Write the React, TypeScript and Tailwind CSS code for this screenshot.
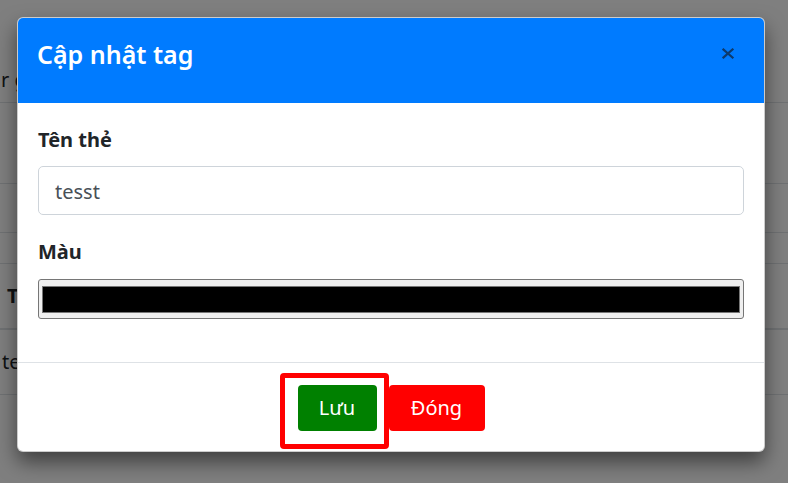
import React from "react";

export default function App() {
  return (
    <div
      className="relative w-[788px] h-[483px] overflow-hidden bg-white text-[#212529]"
      style={{ fontFamily: '"Noto Sans", "Open Sans", sans-serif' }}
    >
      {/* background page */}
      <div className="flex flex-col w-full">
        <div className="h-[52px]" />
        <div className="h-[51px] border-b border-[#dee2e6] flex items-center text-[20px] text-[#212529] pl-[1px] pt-[6px]">
          r g
        </div>
        <div className="h-[81px] border-b border-[#dee2e6]" />
        <div className="h-[49px] border-b border-[#dee2e6]" />
        <div className="h-[31px] border-b border-[#dee2e6]" />
        <div className="h-[66px] border-b-2 border-[#dee2e6] flex items-center pl-[7px] text-[20px] font-bold text-[#212529]">
          Tên thẻ
        </div>
        <div className="h-[65px] border-b border-[#dee2e6] flex items-center pl-[2px] text-[20px] text-[#212529]">
          tesst
        </div>
      </div>

      {/* backdrop */}
      <div className="absolute inset-0 bg-black/50" />

      {/* modal */}
      <div className="absolute inset-0 flex justify-start pl-[17px] pt-[17px]">
        <div className="w-[748px] h-[435px] flex flex-col bg-white rounded-[6px] overflow-hidden border border-black/20 shadow-[0_10px_20px_rgba(0,0,0,0.5)]">
          <div className="h-[85px] bg-[#007bff] flex items-start pl-[19px] pr-[30px] shrink-0">
            <h5 className="text-[25px] leading-[37px] font-semibold text-white mt-[18px]">
              Cập nhật tag
            </h5>
            <svg
              className="ml-auto mt-[30px]"
              width="12"
              height="11"
              viewBox="0 0 12 11"
            >
              <path
                d="M1.5 1.5 L10.5 9.5 M10.5 1.5 L1.5 9.5"
                stroke="#0d3a6c"
                strokeWidth="2.2"
                strokeLinecap="square"
              />
            </svg>
          </div>

          <div className="flex flex-col px-[20px] pt-[22px] pb-[43px]">
            <div className="flex flex-col mb-[22px]">
              <label className="text-[20px] leading-[30px] font-bold text-[#212529] mb-[11px]">
                Tên thẻ
              </label>
              <div className="h-[49px] border border-[#ced4da] rounded-[5px] flex items-center px-[16px] pt-[2px] text-[20px] text-[#495057]">
                tesst
              </div>
            </div>
            <div className="flex flex-col">
              <label className="text-[20px] leading-[30px] font-bold text-[#212529] mb-[12px]">
                Màu
              </label>
              <div className="h-[40px] bg-[#efefef] border border-[#767676] rounded-[3px] px-[3px] pt-[6px] pb-[5px] flex">
                <div className="flex-1 bg-black border border-[#777777]" />
              </div>
            </div>
          </div>

          <div className="border-t border-[#dee2e6] flex justify-center items-start gap-[12px] pt-[22px] pb-[21px]">
            <div className="relative">
              <button className="w-[79px] h-[46px] rounded-[4px] bg-[#008000] text-white text-[20px] leading-[30px] flex items-center justify-center">
                Lưu
              </button>
              <div className="absolute -left-[18px] -top-[12px] -right-[12px] -bottom-[18px] border-[5px] border-[#ff0000] rounded-[4px] z-10" />
            </div>
            <button className="w-[96px] h-[46px] rounded-[4px] bg-[#ff0000] text-white text-[20px] leading-[30px] flex items-center justify-center">
              Đóng
            </button>
          </div>
        </div>
      </div>
    </div>
  );
}
